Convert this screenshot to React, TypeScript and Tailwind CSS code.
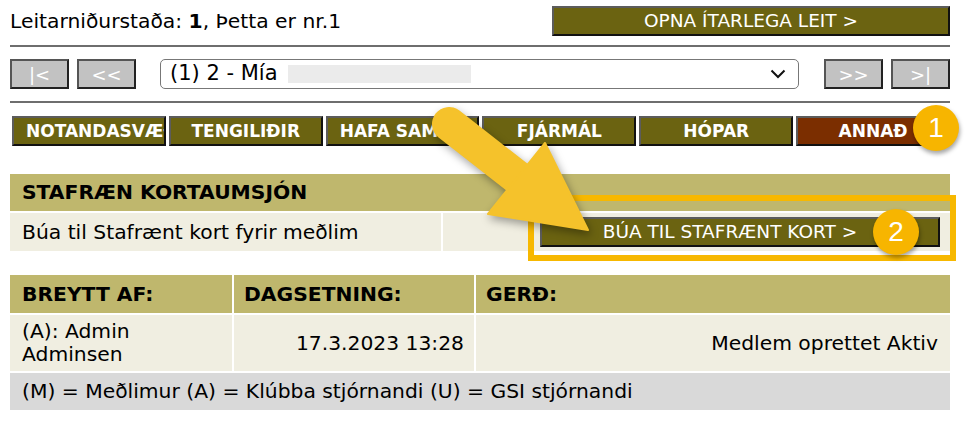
import React from "react";

const olive = "bg-[#6b6311]";

function Tab({ label, active }: { label: string; active?: boolean }) {
  return (
    <div
      className={`w-[154px] h-[30px] px-[12px] leading-[26px] text-center overflow-hidden whitespace-nowrap border-2 border-t-[#5c5c5c] border-l-[#5c5c5c] border-b-[#111] border-r-[#111] text-white font-bold text-[17px] ${
        active ? "bg-[#7b2e00]" : olive
      }`}
    >
      {label}
    </div>
  );
}

function NavBtn({ label }: { label: string }) {
  return (
    <div className="w-[59px] h-[30px] flex items-center justify-center bg-[#c2c2c2] text-white text-[18px] border-2 border-t-[#555] border-l-[#555] border-b-[#222] border-r-[#222]">
      {label}
    </div>
  );
}

export default function App() {
  return (
    <div className="relative w-[966px] h-[426px] bg-white overflow-hidden text-black font-['DejaVu_Sans',Verdana,sans-serif]">
      <div className="ml-[10px] w-[940px] pt-[6px]">
        {/* row 1 */}
        <div className="flex items-center justify-between h-[30px]">
          <span className="text-[20.3px]">
            Leitarniðurstaða: <b>1</b>, Þetta er nr.1
          </span>
          <div className={`w-[398px] h-[30px] flex items-center justify-center ${olive} text-white text-[18.5px] border-2 border-t-[#5c5c5c] border-l-[#5c5c5c] border-b-[#111] border-r-[#111]`}>
            OPNA ÍTARLEGA LEIT &gt;
          </div>
        </div>
        <div className="mt-[9px] h-[2px] bg-[#6e6e6e]" />
        {/* row 2 */}
        <div className="mt-[12px] flex items-center h-[30px]">
          <NavBtn label="|<" />
          <div className="w-[8px]" />
          <NavBtn label="<<" />
          <div className="ml-[24px] w-[639px] h-[30px] rounded-[5px] border border-[#777] flex items-center pl-[9px] pr-[12px] text-[21px]">
            <span>(1) 2 - Mía</span>
            <div className="ml-[10px] w-[183px] h-[18px] bg-[#ebebeb]" />
            <div className="flex-1" />
            <svg width="16" height="10" viewBox="0 0 16 10">
              <path d="M1.5 1.5 L8 8 L14.5 1.5" fill="none" stroke="#111" strokeWidth="2" />
            </svg>
          </div>
          <div className="ml-[25px]">
            <NavBtn label=">>" />
          </div>
          <div className="w-[8px]" />
          <NavBtn label=">|" />
        </div>
        <div className="mt-[12px] h-[2px] bg-[#6e6e6e]" />
        {/* tabs */}
        <div className="mt-[13px] ml-[2px] flex gap-[3px]">
          <Tab label="NOTANDASVÆÐI" />
          <Tab label="TENGILIÐIR" />
          <Tab label="HAFA SAMBAND" />
          <Tab label="FJÁRMÁL" />
          <Tab label="HÓPAR" />
          <Tab label="ANNAÐ" active />
        </div>
        {/* section */}
        <div className="mt-[28px] h-[37px] bg-[#bfb76d] flex items-center pl-[12px] font-bold text-[20.3px]">
          STAFRÆN KORTAUMSJÓN
        </div>
        <div className="mt-[2px] flex gap-[2px] h-[38px]">
          <div className="w-[431px] bg-[#f0eee1] flex items-center pl-[12px] text-[20.3px]">
            Búa til Stafrænt kort fyrir meðlim
          </div>
          <div className="flex-1 bg-[#f0eee1] flex items-center justify-end pr-[10px]">
            <div className={`w-[400px] h-[30px] flex items-center justify-center ${olive} text-white text-[18.5px] border-2 border-t-[#5c5c5c] border-l-[#5c5c5c] border-b-[#111] border-r-[#111]`}>
              <span className="mr-[20px]">BÚA TIL STAFRÆNT KORT &gt;</span>
            </div>
          </div>
        </div>
        {/* table */}
        <div className="mt-[24px] flex gap-[2px] h-[38px] font-bold text-[20.3px]">
          <div className="w-[222px] bg-[#bfb76d] flex items-center pl-[12px]">BREYTT AF:</div>
          <div className="w-[240px] bg-[#bfb76d] flex items-center pl-[10px]">DAGSETNING:</div>
          <div className="flex-1 bg-[#bfb76d] flex items-center pl-[10px]">GERÐ:</div>
        </div>
        <div className="mt-[2px] flex gap-[2px] h-[56px] text-[20.3px]">
          <div className="w-[222px] bg-[#f0eee1] flex items-center pl-[12px] leading-[23px]">
            (A): Admin
            <br />
            Adminsen
          </div>
          <div className="w-[240px] bg-[#f0eee1] flex items-center justify-end pr-[10px]">17.3.2023 13:28</div>
          <div className="flex-1 bg-[#f0eee1] flex items-center justify-end pr-[12px]">Medlem oprettet Aktiv</div>
        </div>
        <div className="mt-[2px] h-[37px] bg-[#d9d9d9] flex items-center pl-[12px] text-[20.3px]">
          (M) = Meðlimur (A) = Klúbba stjórnandi (U) = GSI stjórnandi
        </div>
      </div>

      {/* highlight box */}
      <div className="absolute left-[528px] top-[195px] w-[428px] h-[66px] border-[6px] border-[#f7b800]" />

      {/* arrow */}
      <svg
        className="absolute left-0 top-0 pointer-events-none"
        width="966"
        height="426"
        style={{ filter: "drop-shadow(2px 4px 4px rgba(0,0,0,0.35))" }}
      >
        <line x1="449" y1="124" x2="522" y2="181" stroke="#f5c22b" strokeWidth="34" strokeLinecap="round" />
        <polygon points="588,230 545,143 488,214" fill="#f5c22b" stroke="#f5c22b" strokeWidth="2" strokeLinejoin="round" />
      </svg>

      {/* badges */}
      <div
        className="absolute left-[913px] top-[105px] w-[46px] h-[46px] rounded-full bg-[#f7b500] flex items-center justify-center text-white text-[28px] font-['Liberation_Sans',Arial,sans-serif]"
        style={{ boxShadow: "1px 3px 4px rgba(0,0,0,0.35)" }}
      >
        1
      </div>
      <div
        className="absolute left-[873px] top-[209px] w-[46px] h-[46px] rounded-full bg-[#f7b500] flex items-center justify-center text-white text-[28px] font-['Liberation_Sans',Arial,sans-serif]"
        style={{ boxShadow: "1px 3px 4px rgba(0,0,0,0.35)" }}
      >
        2
      </div>
    </div>
  );
}
